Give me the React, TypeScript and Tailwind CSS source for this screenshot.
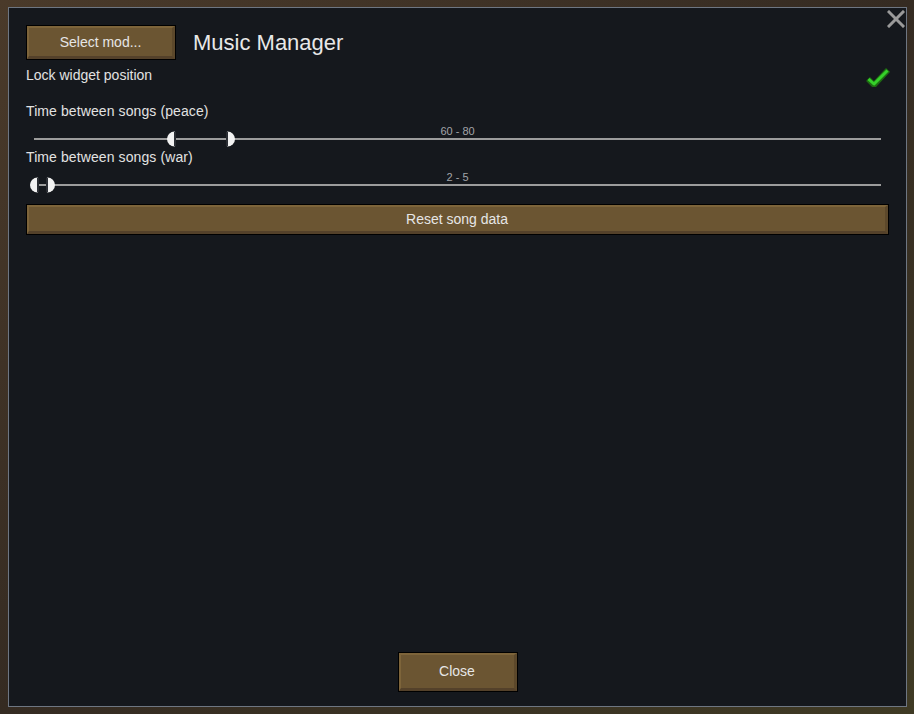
const Handle = ({ side }: { side: "left" | "right" }) => (
  <div
    className={`absolute top-1/2 -translate-y-1/2 w-[9px] h-[15px] bg-[#f2f2f2] ${
      side === "left"
        ? "rounded-l-full border-r-2 border-[#2a2d33] -translate-x-full"
        : "rounded-r-full border-l-2 border-[#2a2d33]"
    }`}
  />
);

const RangeSlider = (props: { label: string; from: number; to: number; range: string }) => (
  <div className="flex flex-col">
    <div className="h-[20px] flex items-center text-[14px] tracking-[0.1px] text-[#e2e2e2]">{props.label}</div>
    <div className="relative h-[26px] mx-[8px]">
      <div className="absolute left-0 right-0 top-[5px] text-center text-[11px] leading-none text-[#a2a4a8]">
        {props.range}
      </div>
      <div className="absolute left-0 right-0 top-[17px] h-[2px] bg-[#9c9c9c]" />
      <div className="absolute top-[18px]" style={{ left: props.from }}>
        <Handle side="left" />
      </div>
      <div className="absolute top-[18px]" style={{ left: props.to }}>
        <Handle side="right" />
      </div>
    </div>
  </div>
);

const WoodButton = (props: { children: any; className?: string }) => (
  <div className={`border border-black bg-[#1a1207] ${props.className ?? ""}`}>
    <div className="h-full flex items-center justify-center bg-[#6b5532] border-t-2 border-l-2 border-[#7d643a] border-b-[3px] border-r-[3px] border-b-[#54412a] border-r-[#5c482b] text-[#e6e6e6] text-[14px]">
      {props.children}
    </div>
  </div>
);

const App = () => {
  return (
    <div className="w-[914px] h-[714px] bg-[#3b3026] bg-gradient-to-br from-[#4a3a2a] via-[#352b22] to-[#3f3a24] relative overflow-hidden font-['Liberation_Sans',Arial,sans-serif]">
      <div className="absolute left-[8px] top-[7px] w-[899px] h-[700px] bg-[#15181d] border border-[#6e7682] flex flex-col px-[17px] pt-[17px] pb-[14px]">
        <button className="absolute right-[1px] top-[2px] w-[18px] h-[18px] text-[#9a9a9a]">
          <svg viewBox="0 0 18 18" className="w-full h-full">
            <path d="M2 2 L16 16 M16 2 L2 16" stroke="currentColor" strokeWidth="3" strokeLinecap="square" />
          </svg>
        </button>

        <div className="flex items-center gap-[17px]">
          <WoodButton className="w-[150px] h-[35px]">Select mod...</WoodButton>
          <span className="text-[22px] text-[#e8e8e8]">Music Manager</span>
        </div>

        <div className="flex items-center justify-between mt-[5px] h-[20px]">
          <span className="text-[14px] text-[#e2e2e2]">Lock widget position</span>
          <svg viewBox="0 0 24 20" className="w-[24px] h-[20px] mr-[-1px] mt-[4px]">
            <path d="M2 12 L8 18 L22 3" fill="none" stroke="#1e6b12" strokeWidth="5.5" strokeLinejoin="round" />
            <path d="M2.5 12 L8 17 L21.5 3.5" fill="none" stroke="#35d02a" strokeWidth="3" strokeLinejoin="round" />
          </svg>
        </div>

        <div className="mt-[16px]">
          <RangeSlider label="Time between songs (peace)" from={142} to={192} range="60 - 80" />
        </div>
        <RangeSlider label="Time between songs (war)" from={5} to={12} range="2 - 5" />

        <WoodButton className="mt-[11px] w-full h-[31px]">Reset song data</WoodButton>

        <div className="flex-1" />
        <div className="flex justify-center">
          <WoodButton className="w-[120px] h-[40px]">Close</WoodButton>
        </div>
      </div>
    </div>
  );
};

export default App;
